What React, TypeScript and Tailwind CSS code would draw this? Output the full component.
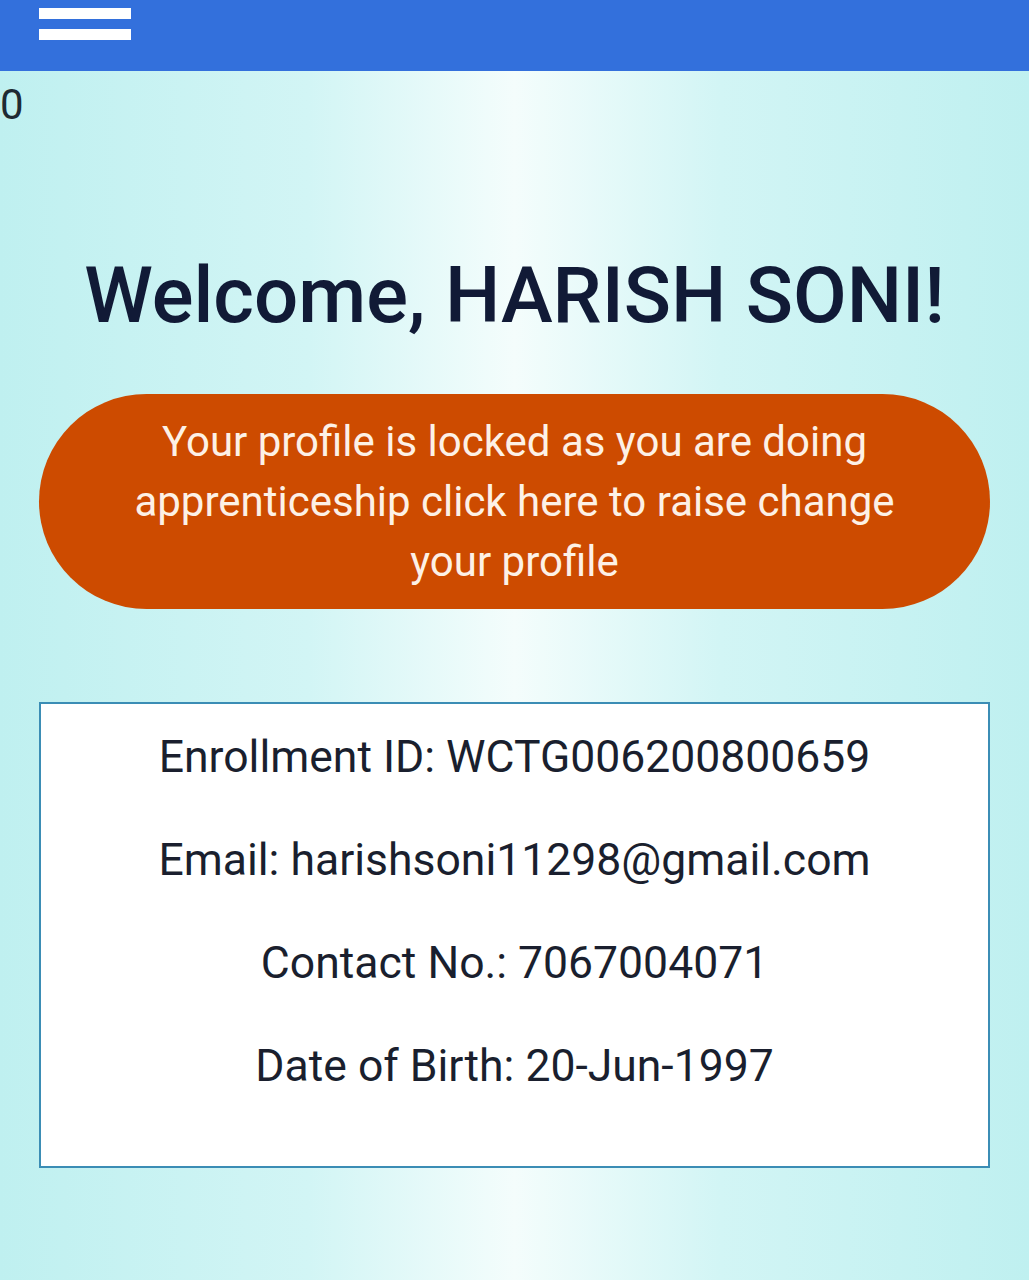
import React from 'react';

export default function App() {
  const details = [
    'Enrollment ID: WCTG006200800659',
    'Email: harishsoni11298@gmail.com',
    'Contact No.: 7067004071',
    'Date of Birth: 20-Jun-1997',
  ];

  return (
    <div className="min-h-[1280px] w-full bg-[linear-gradient(to_right,#bff0f0_0%,#d2f5f5_30%,#f4fdfc_50%,#d2f5f5_70%,#bff0f0_100%)] font-['Roboto',sans-serif]">
      {/* Top bar */}
      <header className="h-[71px] bg-[#3370dc] pl-[39px] pt-[8px] flex flex-col gap-[10px]">
        <div className="w-[92px] h-[11px] bg-white" />
        <div className="w-[92px] h-[11px] bg-white" />
      </header>

      <div className="text-[42px] leading-none text-[#1e2a33] pt-[13px]">0</div>

      <h1 className="mt-[131px] text-center text-[78px] font-medium leading-none text-[#111a36]">
        Welcome, HARISH SONI!
      </h1>

      {/* Locked profile notice */}
      <div className="mx-[39px] mt-[59px] h-[215px] rounded-full bg-[#cd4b00] flex items-center justify-center px-[88px]">
        <p className="text-center text-[42px] leading-[60px] text-[#fdf1e6]">
          Your profile is locked as you are doing apprenticeship click here to raise change your profile
        </p>
      </div>

      {/* Details card */}
      <div className="mx-[39px] mt-[93px] h-[466px] bg-white border-2 border-[#3b8db5] pt-[25px] flex flex-col items-center gap-[47px]">
        {details.map((d) => (
          <p key={d} className="text-[44.5px] leading-[56px] text-[#1a1f2e]">
            {d}
          </p>
        ))}
      </div>
    </div>
  );
}
